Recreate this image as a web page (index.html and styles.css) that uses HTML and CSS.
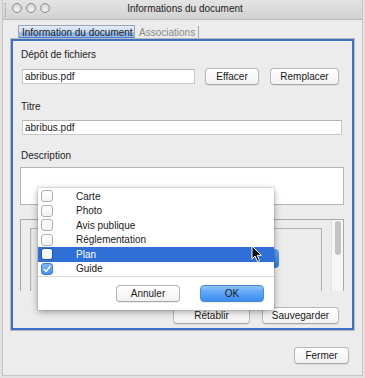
FILE: index.html
```html
<!DOCTYPE html>
<html lang="fr">
<head>
  <meta charset="UTF-8">
  <title>Informations du document</title>
  <link rel="stylesheet" href="styles.css">
</head>
<body>
  <div class="window">
    <div class="frame">
      <!-- Barre de titre -->
      <div class="titlebar">
        <span class="grip"></span>
        <div class="lights"><span></span><span></span><span></span></div>
        <div class="title">Informations du document</div>
      </div>

      <div class="tabs">
        <div class="tab active">Information du document</div>
        <div class="tab">Associations</div>
      </div>

      <div class="panel">
        <div class="label">Dépôt de fichiers</div>
        <div class="row">
          <div class="field file">abribus.pdf</div>
          <button class="btn effacer">Effacer</button>
          <button class="btn remplacer">Remplacer</button>
        </div>

        <div class="label titre">Titre</div>
        <div class="field wide">abribus.pdf</div>

        <div class="label desc">Description</div>
        <div class="textarea"></div>

        <div class="listbox">
          <div class="inner">
            <div class="hidden-btn"></div>
          </div>
          <div class="scroll"><div class="thumb"></div></div>
        </div>

        <div class="actions">
          <button class="btn wbtn">Rétablir</button>
          <button class="btn wbtn">Sauvegarder</button>
        </div>
      </div>

      <div class="footer">
        <button class="btn fermer">Fermer</button>
      </div>
    </div>

    <!-- Menu des types de document -->
    <div class="popup">
      <div class="options">
        <div class="opt"><span class="check"></span>Carte</div>
        <div class="opt"><span class="check"></span>Photo</div>
        <div class="opt"><span class="check"></span>Avis publique</div>
        <div class="opt"><span class="check"></span>Réglementation</div>
        <div class="opt selected"><span class="check"></span>Plan</div>
        <div class="opt"><span class="check on">
          <svg width="10" height="10" viewBox="0 0 10 10"><path d="M2 5.2 L4.2 7.4 L8 2.4" fill="none" stroke="#fff" stroke-width="1.4" stroke-linecap="round" stroke-linejoin="round"/></svg>
        </span>Guide</div>
      </div>
      <div class="popup-actions">
        <button class="btn pbtn">Annuler</button>
        <button class="btn pbtn ok">OK</button>
      </div>
    </div>

    <svg class="cursor" width="12" height="18" viewBox="0 0 12 18">
      <path d="M1 1 L1 14 L4 11 L6.5 16.5 L8.5 15.6 L6.2 10.3 L10.3 10.3 Z" fill="#000" stroke="#fff" stroke-width="1" stroke-linejoin="round"/>
    </svg>
  </div>
</body>
</html>
```

FILE: styles.css
```css
/* Reset */
* {
  box-sizing: border-box;
  margin: 0;
  padding: 0;
}
body {
  font-family: "Liberation Sans", Arial, sans-serif;
  font-size: 10px;
  color: #1c1c1c;
  background: #e2e2e2;
  width: 365px;
  height: 378px;
  overflow: hidden;
}
.window {
  position: relative;
  width: 365px;
  height: 378px;
  padding: 0 2px 2px 2px;
}
.frame {
  height: 376px;
  background: #ececec;
  border: 1px solid #c6c6c6;
  border-top: 0;
  display: flex;
  flex-direction: column;
}

/* Barre de titre */
.titlebar {
  height: 20px;
  background: linear-gradient(#e4e4e4, #d2d2d2);
  border-bottom: 1px solid #b9b9b9;
  display: flex;
  align-items: center;
}
.grip {
  width: 2px;
  height: 14px;
  margin-left: 2px;
  border-left: 1px dotted #9a9a9a;
}
.lights {
  display: flex;
  gap: 4px;
  margin-left: 5px;
  margin-top: -4px;
}
.lights span {
  width: 10px;
  height: 10px;
  border-radius: 50%;
  border: 1px solid #8e8e8e;
  background: radial-gradient(circle at 50% 70%, #f4f4f4, #c9c9c9);
}
.title {
  flex: 1;
  text-align: center;
  margin-right: 42px;
  margin-top: -2px;
  color: #222;
  white-space: nowrap;
}

/* Onglets */
.tabs {
  display: flex;
  margin: 5px 0 0 15px;
  height: 14px;
}
.tab {
  padding: 1px 0 0 4px;
  line-height: 12px;
  color: #8a8a8a;
  white-space: nowrap;
}
.tab.active {
  width: 117px;
  color: #1a1a1a;
  border: 1px solid #9aa6b8;
  border-bottom: 0;
  padding-left: 3px;
  background: linear-gradient(#e6eefa 0%, #c4d8f3 45%, #8fb6ea 55%, #9cc0ee 100%);
  box-shadow: inset 0 -2px 0 #4f7fd0;
}
.tab:last-child {
  width: 64px;
  padding-left: 4px;
  border-right: 1px solid #a8a8a8;
  height: 12px;
  margin-top: 1px;
  line-height: 11px;
}

/* Panneau principal */
.panel {
  margin: 0 8px 0 8px;
  height: 291px;
  border: 2px solid #3f6fcb;
  box-shadow: 0 0 0 1px #b8b8b8;
  padding: 7px 0 0 8px;
  display: flex;
  flex-direction: column;
}
.label {
  height: 14px;
  line-height: 14px;
}
.row {
  display: flex;
  align-items: center;
  height: 17px;
  margin-top: 6px;
}
.field {
  height: 15px;
  line-height: 14px;
  background: #fff;
  border: 1px solid #c9c9c9;
  border-top-color: #b4b4b4;
  padding-left: 2px;
  margin-left: 1px;
}
.field.file {
  width: 173px;
}
.field.wide {
  width: 320px;
  margin-top: 6px;
}
.titre { margin-top: 15px; }
.desc { margin-top: 14px; }
.textarea {
  width: 324px;
  height: 38px;
  margin: 4px 0 0 -1px;
  background: #fff;
  border: 1px solid #b5b5b5;
}

/* Boutons */
.btn {
  font-family: inherit;
  font-size: 10px;
  color: #1a1a1a;
  height: 17px;
  background: linear-gradient(#ffffff, #f2f2f2);
  border: 1px solid #b7b7b7;
  border-bottom-color: #a5a5a5;
  border-radius: 4px;
  box-shadow: 0 1px 0 rgba(0, 0, 0, 0.06);
}
.effacer { width: 54px; margin-left: 10px; }
.remplacer { width: 69px; margin-left: 11px; }

/* Liste arrière-plan */
.listbox {
  width: 324px;
  height: 72px;
  margin: 14px 0 0 -1px;
  border: 1px solid #a9a9a9;
  border-bottom: 0;
  display: flex;
}
.inner {
  width: 293px;
  margin: 8px 0 0 9px;
  border: 1px solid #b2b2b2;
  border-bottom: 0;
  box-shadow: inset 1px 0 0 #e0e0e0;
  padding-top: 20px;
}
.hidden-btn {
  width: 60px;
  height: 19px;
  margin-left: 188px;
  border-radius: 4px;
  background: linear-gradient(#6aa9f3, #2f7ce8);
}
.scroll {
  width: 12px;
  margin-left: 9px;
  background: #f6f6f6;
  border-left: 1px solid #e2e2e2;
  padding: 1px 0 0 3px;
}
.thumb {
  width: 6px;
  height: 34px;
  border-radius: 3px;
  background: #c3c3c3;
}
.actions {
  display: flex;
  justify-content: flex-end;
  gap: 12px;
  margin-top: 16px;
  padding-right: 13px;
}
.wbtn { width: 77px; }

.footer {
  display: flex;
  justify-content: flex-end;
  margin-top: 17px;
  padding-right: 13px;
}
.fermer { width: 55px; }

/* Menu déroulant */
.popup {
  position: absolute;
  left: 38px;
  top: 188px;
  width: 236px;
  height: 122px;
  background: #fff;
  box-shadow: 0 2px 7px rgba(0, 0, 0, 0.35), 0 0 0 1px rgba(0, 0, 0, 0.08);
  display: flex;
  flex-direction: column;
}
.options {
  padding-top: 1px;
  border-bottom: 1px solid #d9d9d9;
}
.opt {
  height: 14.5px;
  display: flex;
  align-items: center;
  padding-left: 3px;
  color: #1a1a1a;
}
.opt.selected {
  background: #2f6fd6;
  color: #fff;
}
.check {
  width: 12px;
  height: 12px;
  margin-right: 23px;
  border: 1px solid #b0b0b0;
  border-radius: 3px;
  background: linear-gradient(#ffffff, #f3f3f3);
  display: flex;
  align-items: center;
  justify-content: center;
}
.selected .check {
  border-color: #1f58b8;
}
.check.on {
  border-color: #3e7ed8;
  background: linear-gradient(#82b8f8, #4a8ff0);
}
.popup-actions {
  display: flex;
  justify-content: flex-end;
  gap: 20px;
  margin-top: 8px;
  padding-right: 10px;
}
.pbtn { width: 64px; height: 17px; }
.ok {
  border-color: #4c86d6;
  background: linear-gradient(#8cc2fb, #5aa2f6 50%, #3b8cf2);
}

.cursor {
  position: absolute;
  left: 251px;
  top: 245px;
}
```
